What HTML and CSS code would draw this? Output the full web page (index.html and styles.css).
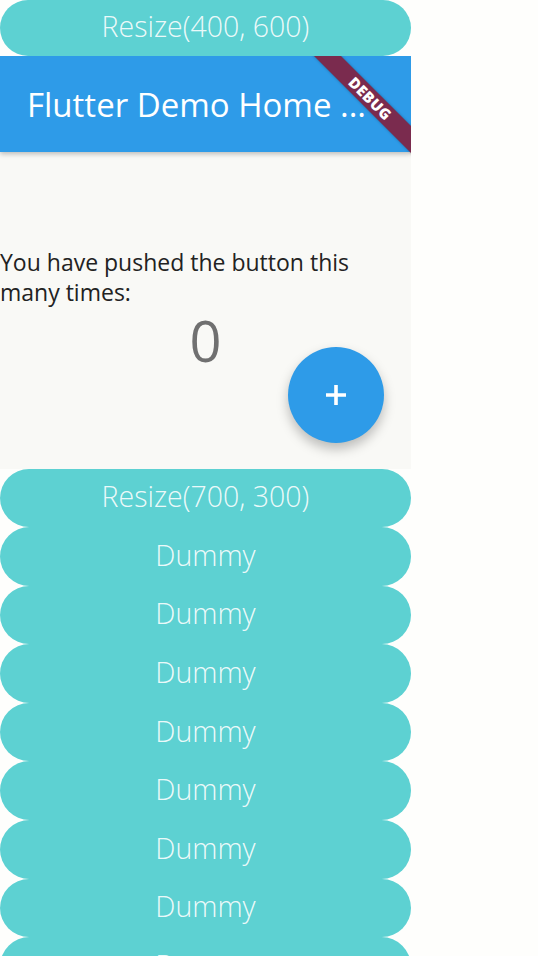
FILE: index.html
```html
<!DOCTYPE html>
<html>
<head>
<meta charset="utf-8">
<link rel="stylesheet" href="styles.css">
</head>
<body>
<div class="col">
  <div class="btn first">Resize(400, 600)</div>
  <div class="app">
    <div class="appbar"><span class="title">Flutter Demo Home ...</span></div>
    <div class="content">
      <div class="msg">You have pushed the button this many times:</div>
      <div class="count">0</div>
    </div>
    <div class="fab">
      <svg width="24" height="24" viewBox="0 0 24 24"><path d="M12 2v20M2 12h20" stroke="#fff" stroke-width="3.6" fill="none"/></svg>
    </div>
    <div class="banner">DEBUG</div>
  </div>
  <div class="btn">Resize(700, 300)</div>
  <div class="btn">Dummy</div>
  <div class="btn">Dummy</div>
  <div class="btn">Dummy</div>
  <div class="btn">Dummy</div>
  <div class="btn">Dummy</div>
  <div class="btn">Dummy</div>
  <div class="btn">Dummy</div>
  <div class="btn">Dummy</div>
</div>
</body>
</html>
```
FILE: styles.css
```css
html, body {
  margin: 0;
  padding: 0;
  background: #fefefc;
  overflow: hidden;
  height: 956px;
}
.col {
  width: 411px;
  display: flex;
  flex-direction: column;
}
.btn {
  flex: none;
  box-sizing: border-box;
  height: 58.6px;
  padding-bottom: 3px;
  border-radius: 30px;
  background: #5dd1d2;
  color: rgba(255,255,255,0.9);
  font-family: "Open Sans", sans-serif;
  font-weight: 300;
  font-size: 28.5px;
  line-height: 50px;
  display: flex;
  align-items: center;
  justify-content: center;
  white-space: nowrap;
}
.btn.first {
  height: 56px;
  border-radius: 28px;
  padding-bottom: 4px;
}
.app {
  flex: none;
  height: 412.5px;
  position: relative;
  overflow: hidden;
  background: #f9f9f6;
  display: flex;
  flex-direction: column;
}
.appbar {
  flex: none;
  height: 96px;
  background: #2e9be8;
  box-shadow: 0 2px 5px rgba(0,0,0,0.25);
  display: flex;
  align-items: center;
  padding-left: 27px;
  position: relative;
  z-index: 1;
}
.title {
  color: #fff;
  font-family: "Open Sans", sans-serif;
  font-size: 33px;
  white-space: nowrap;
}
.content {
  flex: 1;
  display: flex;
  flex-direction: column;
  justify-content: center;
  font-family: "Open Sans", sans-serif;
}
.msg {
  font-size: 23px;
  line-height: 30px;
  color: #222;
  width: 390px;
}
.count {
  text-align: center;
  font-size: 56px;
  line-height: 66px;
  color: #707070;
}
.fab {
  position: absolute;
  right: 27px;
  bottom: 26px;
  width: 96px;
  height: 96px;
  border-radius: 50%;
  background: #2e9be8;
  box-shadow: 0 6px 12px rgba(0,0,0,0.25);
  display: flex;
  align-items: center;
  justify-content: center;
  z-index: 2;
}
.banner {
  position: absolute;
  left: 290px;
  top: 33px;
  width: 160px;
  height: 19px;
  transform: rotate(45deg);
  background: #7a2b4e;
  color: #fff;
  font-family: "Open Sans", sans-serif;
  font-weight: 800;
  font-size: 15px;
  line-height: 19px;
  text-align: center;
  letter-spacing: 0.3px;
  z-index: 3;
  box-shadow: 0 0 3px rgba(0,0,0,0.3);
}
```
